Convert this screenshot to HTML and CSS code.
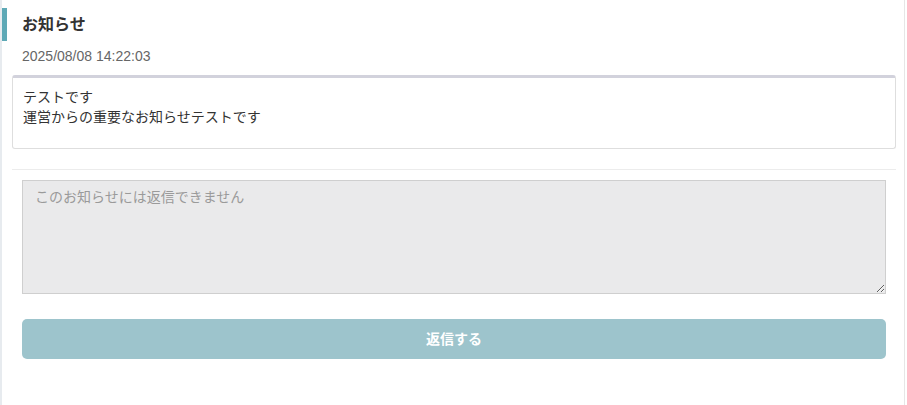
FILE: index.html
```html
<!DOCTYPE html>
<html lang="ja">
<head>
<meta charset="utf-8">
<link rel="stylesheet" href="styles.css">
</head>
<body>
<div class="panel">
  <h1 class="title">お知らせ</h1>
  <div class="date">2025/08/08 14:22:03</div>
  <div class="message">テストです<br>運営からの重要なお知らせテストです</div>
  <hr class="divider">
  <form class="reply">
    <textarea class="reply-input" placeholder="このお知らせには返信できません" disabled></textarea>
    <button type="button" class="reply-btn">返信する</button>
  </form>
</div>
</body>
</html>
```
FILE: styles.css
```css
html, body {
  margin: 0;
  padding: 0;
  background: #fff;
}
body {
  font-family: "Liberation Sans", "Noto Sans CJK JP", sans-serif;
  color: #333;
}
.panel {
  box-sizing: border-box;
  width: 905px;
  height: 405px;
  border-left: 2px solid #e7ebef;
  border-right: 1px solid #e6e6e6;
  padding-top: 8px;
}
.title {
  margin: 0;
  height: 33px;
  line-height: 33px;
  border-left: 5px solid #5ea9b6;
  padding-left: 15px;
  font-size: 16px;
  font-weight: bold;
  color: #333;
}
.date {
  margin: 5px 0 0 20px;
  font-size: 14px;
  line-height: 20px;
  color: #666;
}
.message {
  margin: 9px 8px 0 10px;
  border: 1px solid #dedede;
  border-top: 3px solid #d2d2dc;
  border-radius: 3px;
  padding: 9px 11px 21px 10px;
  font-size: 14px;
  line-height: 20px;
  color: #333;
}
.divider {
  margin: 20px 8px 0 10px;
  border: 0;
  border-top: 1px solid #ececec;
  height: 0;
}
.reply {
  display: flex;
  flex-direction: column;
  gap: 25px;
  padding: 10px 18px 0 20px;
}
.reply-input {
  display: block;
  box-sizing: border-box;
  width: 100%;
  height: 114px;
  margin: 0;
  padding: 6px 12px;
  border: 1px solid #cfcfcf;
  border-radius: 0;
  background: #eaeaeb;
  font-family: "Liberation Sans", "Noto Sans CJK JP", sans-serif;
  font-size: 14px;
  line-height: 20px;
  color: #333;
  resize: both;
}
.reply-input::placeholder {
  color: #9a9a9a;
}
.reply-btn {
  display: block;
  width: 100%;
  height: 40px;
  margin: 0;
  padding: 0 0 3px;
  border: 0;
  border-radius: 5px;
  background: #9dc4cc;
  color: #fff;
  font-family: "Liberation Sans", "Noto Sans CJK JP", sans-serif;
  font-size: 14px;
  font-weight: bold;
}
```
